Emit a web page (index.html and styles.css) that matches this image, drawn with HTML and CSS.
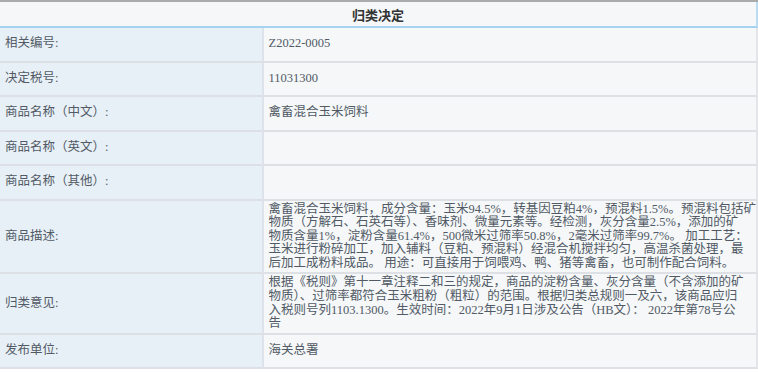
FILE: index.html
```html
<!DOCTYPE html>
<html lang="zh-CN">
<head>
    <meta charset="UTF-8">
    <title>归类决定</title>
    <link rel="stylesheet" href="styles.css">
</head>
<body>
    <table class="decision-table">
        <thead>
            <tr>
                <th colspan="2">归类决定</th>
            </tr>
        </thead>
        <tbody>
            <tr>
                <td class="label">相关编号:</td>
                <td class="value">Z2022-0005</td>
            </tr>
            <tr>
                <td class="label">决定税号:</td>
                <td class="value">11031300</td>
            </tr>
            <tr>
                <td class="label">商品名称（中文）:</td>
                <td class="value">禽畜混合玉米饲料</td>
            </tr>
            <tr>
                <td class="label">商品名称（英文）:</td>
                <td class="value"></td>
            </tr>
            <tr>
                <td class="label">商品名称（其他）:</td>
                <td class="value"></td>
            </tr>
            <tr class="multi">
                <td class="label">商品描述:</td>
                <td class="value">禽畜混合玉米饲料，成分含量：玉米94.5%，转基因豆粕4%，预混料1.5%。预混料包括矿<br>物质（方解石、石英石等）、香味剂、微量元素等。经检测，灰分含量2.5%，添加的矿<br>物质含量1%，淀粉含量61.4%，500微米过筛率50.8%，2毫米过筛率99.7%。 加工工艺：<br>玉米进行粉碎加工，加入辅料（豆粕、预混料）经混合机搅拌均匀，高温杀菌处理，最<br>后加工成粉料成品。 用途：可直接用于饲喂鸡、鸭、猪等禽畜，也可制作配合饲料。</td>
            </tr>
            <tr class="multi">
                <td class="label">归类意见:</td>
                <td class="value">根据《税则》第十一章注释二和三的规定，商品的淀粉含量、灰分含量（不含添加的矿<br>物质）、过筛率都符合玉米粗粉（粗粒）的范围。根据归类总规则一及六，该商品应归<br>入税则号列1103.1300。生效时间：2022年9月1日涉及公告（HB文）： 2022年第78号公<br>告</td>
            </tr>
            <tr>
                <td class="label">发布单位:</td>
                <td class="value">海关总署</td>
            </tr>
        </tbody>
    </table>
</body>
</html>
```

FILE: styles.css
```css
body {
    margin: 0;
    font-family: "Liberation Serif", "Noto Sans CJK SC", serif;
    font-size: 12.5px;
    color: #515a65;
    background: #fff;
}

.decision-table {
    width: 758px;
    border-collapse: separate;
    border-spacing: 0;
    border-top: 2px solid #aaaaaa;
}

.decision-table th {
    height: 24px;
    padding: 0;
    background: #f5f7f9;
    border-bottom: 2px solid #a5d2ef;
    border-right: 2px solid #b9dcf3;
    color: #333;
    font-size: 13px;
    font-weight: bold;
    text-align: center;
}

.decision-table td {
    height: 34.5px;
    padding: 2px 5px;
    line-height: 13.6px;
    border-bottom: 2px solid #dde0e4;
    vertical-align: middle;
    box-sizing: border-box;
}

.decision-table td.label {
    width: 266px;
    background: #e8f0f7;
    border-right: 2px solid #dde3e9;
}

.decision-table td.value {
    background: #f5f7f9;
    border-right: 2px solid #e3e5e8;
}

/* long texts keep their own line breaks */
.decision-table tr.multi td {
    height: auto;
}

.decision-table tr.multi td.value {
    padding-right: 0;
    white-space: nowrap;
}
```
